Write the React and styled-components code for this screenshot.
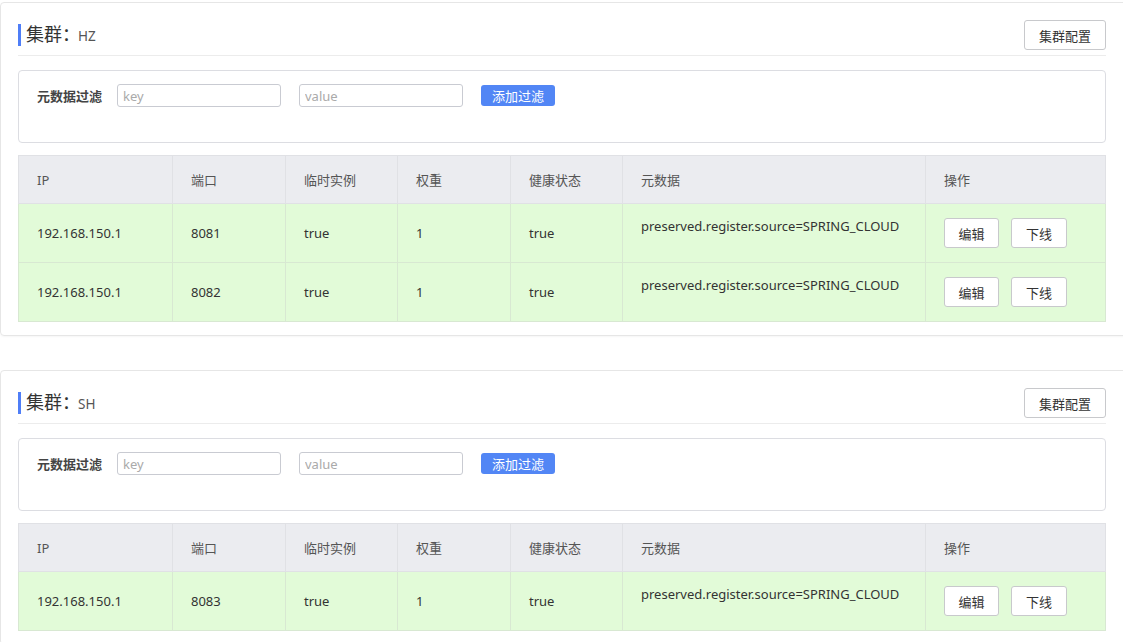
import React from 'react';
import styled, { createGlobalStyle } from 'styled-components';

const GlobalStyle = createGlobalStyle`
  html, body {
    margin: 0;
    padding: 0;
    background: #fff;
    overflow-x: hidden;
  }
  body {
    font-family: "Noto Sans", "Noto Sans CJK SC", sans-serif;
    font-size: 13px;
    color: #333;
  }
`;

const columns = [
  { key: 'ip', title: 'IP', width: 154 },
  { key: 'port', title: '端口', width: 113 },
  { key: 'ephemeral', title: '临时实例', width: 112 },
  { key: 'weight', title: '权重', width: 113 },
  { key: 'healthy', title: '健康状态', width: 112 },
  { key: 'metadata', title: '元数据', width: 303 },
  { key: 'ops', title: '操作' },
];

const clusters = [
  {
    name: 'HZ',
    instances: [
      { ip: '192.168.150.1', port: 8081, ephemeral: 'true', weight: 1, healthy: 'true' },
      { ip: '192.168.150.1', port: 8082, ephemeral: 'true', weight: 1, healthy: 'true' },
    ],
  },
  {
    name: 'SH',
    instances: [
      { ip: '192.168.150.1', port: 8083, ephemeral: 'true', weight: 1, healthy: 'true' },
    ],
  },
];

function App() {
  return (
    <>
      <GlobalStyle />
      <Page>
        {clusters.map((c) => (
          <ClusterCard key={c.name}>
            <TitleRow>
              <Title>
                集群：<small>{c.name}</small>
              </Title>
              <PlainButton $w={82}>集群配置</PlainButton>
            </TitleRow>

            <FilterBox>
              <FilterLabel>元数据过滤</FilterLabel>
              <Input placeholder="key" />
              <Input placeholder="value" />
              <PrimaryButton>添加过滤</PrimaryButton>
            </FilterBox>

            <Table>
              <colgroup>
                {columns.map((col) => (
                  <col key={col.key} style={col.width ? { width: col.width } : undefined} />
                ))}
              </colgroup>
              <thead>
                <tr>
                  {columns.map((col) => (
                    <Th key={col.key}>{col.title}</Th>
                  ))}
                </tr>
              </thead>
              <tbody>
                {c.instances.map((row) => (
                  <tr key={row.port}>
                    <Td>{row.ip}</Td>
                    <Td>{row.port}</Td>
                    <Td>{row.ephemeral}</Td>
                    <Td>{row.weight}</Td>
                    <Td>{row.healthy}</Td>
                    <Td $top>preserved.register.source=SPRING_CLOUD</Td>
                    <Td>
                      <Ops>
                        <PlainButton $w={55}>编辑</PlainButton>
                        <PlainButton $w={56}>下线</PlainButton>
                      </Ops>
                    </Td>
                  </tr>
                ))}
              </tbody>
            </Table>
          </ClusterCard>
        ))}
      </Page>
    </>
  );
}

const Page = styled.div`
  padding-top: 2px;
`;

const ClusterCard = styled.section`
  border: 1px solid #e6e6e6;
  border-radius: 4px;
  margin-right: -8px;
  margin-bottom: 34px;
  padding: 0 24px 13px 17px;
  box-shadow: 0 1px 2px rgba(0, 0, 0, 0.04);
`;

const TitleRow = styled.div`
  display: flex;
  align-items: center;
  justify-content: space-between;
  padding: 17px 0 5px;
  border-bottom: 1px solid #ececec;
`;

const Title = styled.h2`
  margin: 0;
  display: flex;
  align-items: baseline;
  font-size: 18px;
  font-weight: 400;
  color: #333;
  line-height: 20px;
  border-left: 3px solid #4f7ef7;
  padding-left: 5px;
  small {
    font-size: 13.5px;
    color: #555;
    margin-left: -2px;
  }
`;

const PlainButton = styled.button`
  width: ${(p) => p.$w}px;
  height: 30px;
  padding: 0;
  border: 1px solid #c8c9cc;
  border-radius: 3px;
  background: #fff;
  color: #333;
  font-family: "Noto Sans CJK SC", sans-serif;
  font-size: 13px;
  cursor: pointer;
`;

const FilterBox = styled.div`
  margin-top: 14px;
  height: 73px;
  box-sizing: border-box;
  border: 1px solid #dcdde2;
  border-radius: 4px;
  padding: 13px 18px;
  display: flex;
  align-items: flex-start;
  gap: 18px;
`;

const FilterLabel = styled.span`
  font-family: "Noto Sans CJK SC", sans-serif;
  font-weight: 700;
  font-size: 13px;
  color: #444;
  line-height: 23px;
  margin-right: -3px;
`;

const Input = styled.input`
  width: 164px;
  height: 23px;
  box-sizing: border-box;
  border: 1px solid #c9cbd2;
  border-radius: 3px;
  padding: 0 5px;
  font-family: "Noto Sans", sans-serif;
  font-size: 13px;
  color: #333;
  outline: none;
  &::placeholder {
    color: #aaa;
  }
`;

const PrimaryButton = styled.button`
  width: 74px;
  height: 21px;
  margin-top: 1px;
  padding: 0;
  border: none;
  border-radius: 3px;
  background: #5286f5;
  color: #fff;
  font-family: "Noto Sans CJK SC", sans-serif;
  font-size: 13px;
`;

const Table = styled.table`
  margin-top: 12px;
  width: 100%;
  border-collapse: collapse;
  table-layout: fixed;
`;

const Th = styled.th`
  height: 48px;
  box-sizing: border-box;
  padding: 0 18px;
  text-align: left;
  font-weight: 400;
  color: #555;
  background: #ebecf0;
  border: 1px solid #e0e1e5;
  font-family: "Noto Sans", "Noto Sans CJK SC", sans-serif;
`;

const Td = styled.td`
  height: 59px;
  box-sizing: border-box;
  padding: ${(p) => (p.$top ? '12px 18px 0' : '0 18px')};
  vertical-align: ${(p) => (p.$top ? 'top' : 'middle')};
  background: #e2fbd8;
  border: 1px solid #d8e8d2;
  color: #333;
  line-height: 20px;
  white-space: nowrap;
`;

const Ops = styled.div`
  display: flex;
  gap: 12px;
`;

export default App;
